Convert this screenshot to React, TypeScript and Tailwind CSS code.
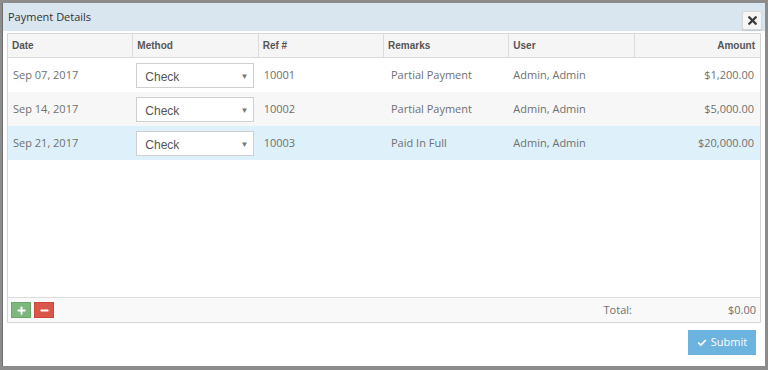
import { Check, X, Plus, Minus } from "lucide-react";

type Payment = {
  date: string;
  ref: string;
  remarks: string;
  user: string;
  amount: string;
};

const payments: Payment[] = [
  { date: "Sep 07, 2017", ref: "10001", remarks: "Partial Payment", user: "Admin, Admin", amount: "$1,200.00" },
  { date: "Sep 14, 2017", ref: "10002", remarks: "Partial Payment", user: "Admin, Admin", amount: "$5,000.00" },
  { date: "Sep 21, 2017", ref: "10003", remarks: "Paid In Full", user: "Admin, Admin", amount: "$20,000.00" },
];

const rowBg = ["bg-white", "bg-[#f7f7f7]", "bg-[#def0fa]"];

function MethodSelect() {
  return (
    <div className="flex h-[25px] w-[118px] items-center justify-between border border-[#cfcfcf] bg-white pl-[8px] pr-[5px] pt-[3px] font-['Liberation_Sans',Arial,sans-serif] text-[12px] text-[#555]">
      <span>Check</span>
      <span className="text-[8px] text-[#777]">▼</span>
    </div>
  );
}

export default function App() {
  return (
    <div className="h-[370px] w-[768px] overflow-hidden bg-[#8c8c8c] pb-[4px] pl-[2px] pr-[3px] pt-[3px]">
      <div className="flex h-full flex-col border-l border-[#6f6f6f] bg-white font-['Open_Sans',sans-serif]">
        <div className="flex h-[28px] items-center justify-between bg-[#dae6ef] pl-[5px] pr-[3px]">
          <span className="text-[11px] text-[#333]">Payment Details</span>
          <button className="mt-[6px] flex h-[19px] w-[20px] items-center justify-center rounded-[2px] border border-[#d8d8d8] bg-[#f6f6f6] shadow-[0_1px_1px_rgba(0,0,0,0.15)]">
            <X size={13} strokeWidth={4.5} className="text-[#3a3a3a]" />
          </button>
        </div>

        <div className="flex flex-1 flex-col px-[4px] pt-[2px]">
          <div className="flex h-[290px] flex-col border border-[#d6d6d6]">
            <div className="grid h-[24px] grid-cols-6 border-b border-[#dcdcdc] bg-[#f5f5f5] font-['Liberation_Sans',Arial,sans-serif] text-[10px] font-bold text-[#555]">
              <div className="flex items-center border-r border-[#dcdcdc] pl-[4px]">Date</div>
              <div className="flex items-center border-r border-[#dcdcdc] pl-[4px]">Method</div>
              <div className="flex items-center border-r border-[#dcdcdc] pl-[4px]">Ref #</div>
              <div className="flex items-center border-r border-[#dcdcdc] pl-[4px]">Remarks</div>
              <div className="flex items-center border-r border-[#dcdcdc] pl-[4px]">User</div>
              <div className="flex items-center justify-end pr-[5px]">Amount</div>
            </div>

            {payments.map((p, i) => (
              <div key={p.ref} className={`grid h-[34px] grid-cols-6 text-[11px] text-[#707070] ${rowBg[i]}`}>
                <div className="flex items-center pl-[5px]">{p.date}</div>
                <div className="flex items-center pl-[3px]">
                  <MethodSelect />
                </div>
                <div className="flex items-center pl-[5px]">{p.ref}</div>
                <div className="flex items-center pl-[7px]">{p.remarks}</div>
                <div className="flex items-center pl-[4px]">{p.user}</div>
                <div className="flex items-center justify-end pr-[6px]">{p.amount}</div>
              </div>
            ))}

            <div className="flex-1" />

            <div className="flex h-[25px] items-center border-t border-[#dcdcdc] bg-[#f9f9f9] pl-[3px] pr-[4px] text-[11px] text-[#707070]">
              <button className="flex h-[16px] w-[20px] items-center justify-center border border-[#6aa86a] bg-[#7db77d]">
                <Plus size={11} strokeWidth={4} className="text-white" />
              </button>
              <button className="ml-[3px] flex h-[16px] w-[20px] items-center justify-center border border-[#d0473a] bg-[#d9574a]">
                <Minus size={11} strokeWidth={4} className="text-white" />
              </button>
              <div className="flex-1" />
              <span className="mr-[96px]">Total:</span>
              <span>$0.00</span>
            </div>
          </div>

          <div className="flex justify-end pr-[5px] pt-[7px]">
            <button className="flex h-[25px] w-[68px] items-center justify-center gap-[4px] bg-[#6cb3e0] text-[11px] text-white">
              <Check size={10} strokeWidth={4} />
              <span>Submit</span>
            </button>
          </div>
        </div>
      </div>
    </div>
  );
}
